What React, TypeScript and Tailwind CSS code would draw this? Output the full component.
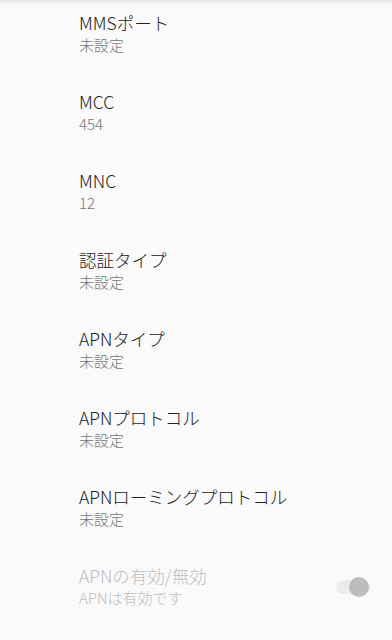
import React from "react";

const rows = [
  { t: "MMSポート", s: "未設定" },
  { t: "MCC", s: "454" },
  { t: "MNC", s: "12" },
  { t: "認証タイプ", s: "未設定" },
  { t: "APNタイプ", s: "未設定" },
  { t: "APNプロトコル", s: "未設定" },
  { t: "APNローミングプロトコル", s: "未設定" },
];

export default function App() {
  return (
    <div
      className="relative w-[392px] h-[640px] overflow-hidden bg-[#fafafa] font-light"
      style={{ fontFamily: "'Noto Sans CJK JP', sans-serif" }}
    >
      <div className="absolute top-0 left-0 right-0 h-[5px] bg-gradient-to-b from-[#e6e6e6] to-[#fafafa]" />
      <div className="flex flex-col pt-[10px]">
        {rows.map((r) => (
          <div key={r.t} className="h-[79px] pl-[79px] pr-[22px] flex flex-col">
            <div className="text-[17.5px] leading-[25px] text-[#212121]">{r.t}</div>
            <div className="text-[15px] leading-[20px] text-[#757575]">{r.s}</div>
          </div>
        ))}
        <div className="h-[79px] pl-[79px] pr-[22px] flex items-start justify-between">
          <div className="flex flex-col">
            <div className="text-[17.5px] leading-[25px] text-[#bdbdbd]">APNの有効/無効</div>
            <div className="text-[15px] leading-[20px] text-[#bdbdbd]">APNは有効です</div>
          </div>
          <div className="relative w-[34px] h-[14px] mt-[17px] rounded-full bg-[#ececec]">
            <div className="absolute right-[1px] top-[-3px] w-[20px] h-[20px] rounded-full bg-[#bdbdbd]" />
          </div>
        </div>
      </div>
    </div>
  );
}
